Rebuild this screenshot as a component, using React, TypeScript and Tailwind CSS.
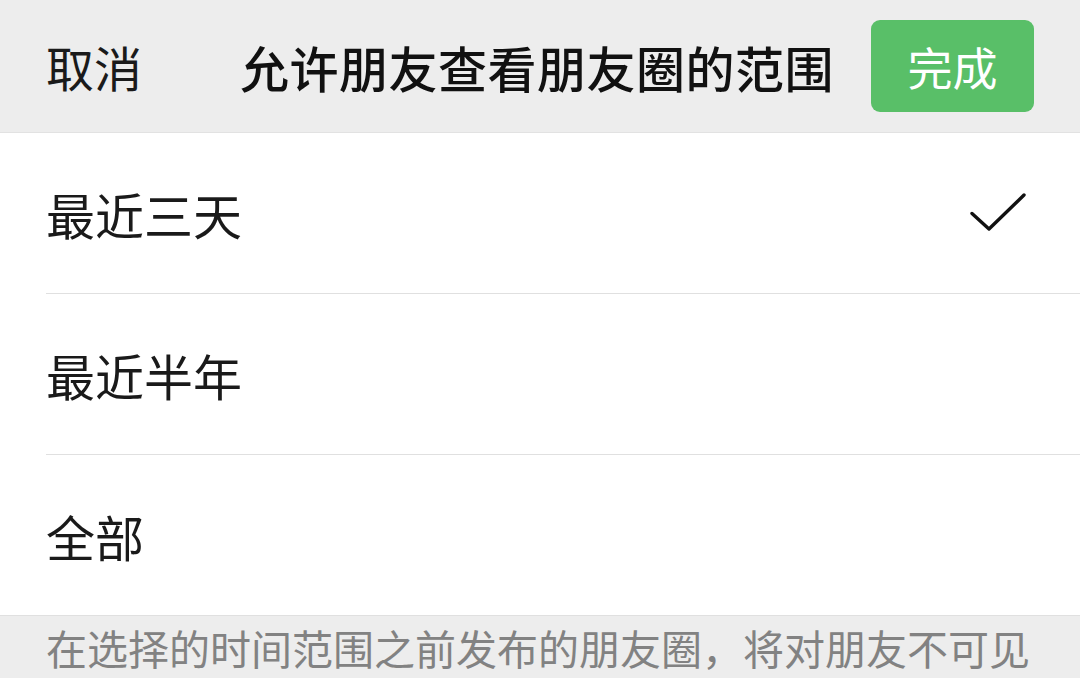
import { Fragment } from 'react';

const options = [
  { label: '最近三天', checked: true },
  { label: '最近半年', checked: false },
  { label: '全部', checked: false },
];

function CheckMark() {
  return (
    <svg width="60" height="44" viewBox="0 0 60 44" fill="none" className="block">
      <path d="M3 22.5 L20 38 L55 4" stroke="#111" strokeWidth="3.4" strokeLinecap="round" strokeLinejoin="round" />
    </svg>
  );
}

export default function App() {
  return (
    <div
      className="w-[1080px] h-[678px] overflow-hidden bg-[#ededed] text-[#111]"
      style={{ fontFamily: '"Noto Sans CJK SC", "Noto Sans", sans-serif' }}
    >
      <header className="h-[133px] grid grid-cols-[1fr_auto_1fr] items-center px-[46px] border-b border-[#e2e2e2]">
        <button type="button" className="justify-self-start text-[48px] leading-none text-[#1a1a1a]">
          取消
        </button>
        <h1 className="text-[49px] font-medium leading-none tracking-[0.5px] text-[#111] -translate-x-[3px]">
          允许朋友查看朋友圈的范围
        </h1>
        <button
          type="button"
          className="justify-self-end w-[163px] h-[92px] rounded-[9px] bg-[#59bf68] text-white text-[45px] leading-none flex items-center justify-center"
        >
          完成
        </button>
      </header>

      <ul className="bg-white">
        {options.map((o, i) => (
          <Fragment key={o.label}>
            {i > 0 && <li className="ml-[46px] h-px bg-[#e0e0e0]" aria-hidden />}
            <li className="h-[160px] flex items-center justify-between pl-[46px] pr-[51px]">
              <span className="text-[49px] leading-none text-[#1a1a1a]">{o.label}</span>
              {o.checked && <CheckMark />}
            </li>
          </Fragment>
        ))}
      </ul>

      <p className="border-t border-[#e0e0e0] pl-[46px] pt-[7px] text-[41px] leading-[1.2] text-[#828282] whitespace-nowrap">
        在选择的时间范围之前发布的朋友圈，将对朋友不可见
      </p>
    </div>
  );
}
